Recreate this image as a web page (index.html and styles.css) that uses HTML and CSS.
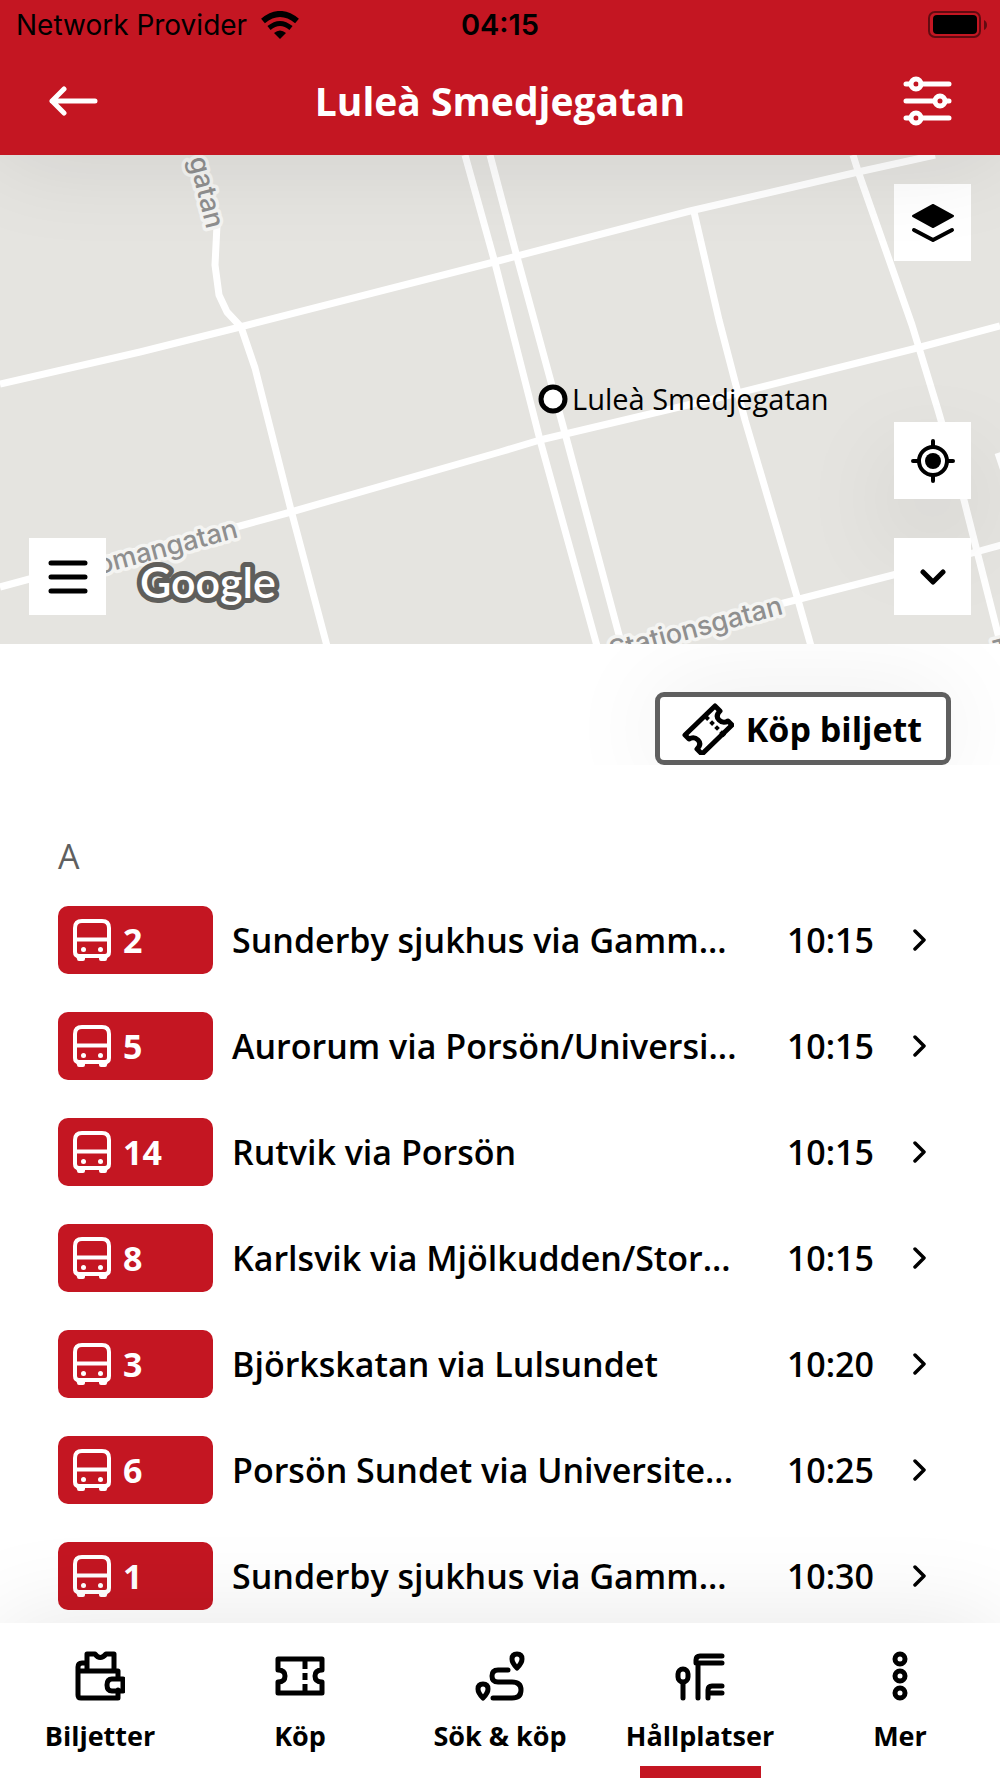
FILE: index.html
```html
<!DOCTYPE html>
<html lang="sv">
<head>
<meta charset="utf-8">
<meta name="viewport" content="width=device-width, initial-scale=1">
<title>Luleà Smedjegatan</title>
<link rel="stylesheet" href="styles.css">
</head>
<body>
<svg class="sprite" aria-hidden="true">
  <symbol id="bus" viewBox="0 0 38 42">
    <path d="M9 2h20q7 0 7 7v24q0 4-4 4H6q-4 0-4-4V9q0-7 7-7z" fill="none" stroke="currentColor" stroke-width="4"/>
    <path d="M2 20.500h34" stroke="currentColor" stroke-width="4"/>
    <path d="M3 37h9v3q0 2-2 2H6q-2 0-2-2zM26 37h9l-1 3q0 2-2 2h-4q-2 0-2-2z" fill="currentColor"/>
    <circle cx="10.500" cy="30.500" r="2.500" fill="currentColor"/><circle cx="27.500" cy="30.500" r="2.500" fill="currentColor"/>
  </symbol>
  <symbol id="next" viewBox="0 0 14 22">
    <path d="M2 2l9 9-9 9" fill="none" stroke="currentColor" stroke-width="3.500" stroke-linecap="round" stroke-linejoin="round"/>
  </symbol>
</svg>

<header class="top">
  <div class="status">
    <div class="carrier">
      <span>Network Provider</span>
      <svg width="38" height="28" viewBox="0 0 38 28" aria-hidden="true">
        <g fill="none" stroke="#000"><path d="M2 10Q19-4 36 10" stroke-width="6"/><path d="M8 17Q19 8 30 17" stroke-width="5"/></g>
        <path d="M13 22q6-5 12 0l-6 6z"/>
      </svg>
    </div>
    <time class="clock">04:15</time>
    <svg class="battery" width="60" height="28" viewBox="0 0 60 28" aria-hidden="true">
      <rect x="1" y="1" width="51" height="25" rx="6" fill="none" stroke="#000" stroke-opacity=".5" stroke-width="2"/>
      <rect x="5" y="4" width="44" height="19" rx="4"/>
      <path d="M56 9q3 1.500 3 5t-3 5z" fill-opacity=".5"/>
    </svg>
  </div>
  <div class="bar">
    <button class="plain" aria-label="Tillbaka">
      <svg width="50" height="30" viewBox="0 0 50 30" fill="none" stroke="#fff" stroke-width="5" stroke-linecap="round" stroke-linejoin="round"><path d="M47 15H4M16 3L4 15l12 12"/></svg>
    </button>
    <h1>Luleà Smedjegatan</h1>
    <button class="plain" aria-label="Filter">
      <svg width="50" height="50" viewBox="0 0 50 50" fill="none" stroke="#fff" stroke-width="5" stroke-linecap="round"><path d="M4 8h4M19 8h28M4 25h28M44 25h3M4 42h4M19 42h28"/><circle cx="14" cy="8" r="5"/><circle cx="38" cy="25" r="5"/><circle cx="14" cy="42" r="5"/></svg>
    </button>
  </div>
</header>

<section class="map" aria-label="Karta">
  <svg class="streets" viewBox="0 155 1000 489" preserveAspectRatio="xMidYMid slice">
    <g fill="none" stroke="#fff" stroke-width="7" stroke-linejoin="round">
      <path d="M0 384L140 352 240 327 498 261 690 211 858 172 935 155"/>
      <path d="M217 225L215 265 219 295 227 312 241 327 255 368 291 510 327 646"/>
      <path d="M0 587L100 560 240 526 291 512 500 452 540 440 730 395 917 348 1000 326"/>
      <path d="M465 155L495 263 540 440 597 646"/>
      <path d="M490 155L517 257 566 437 622 646"/>
      <path d="M694 212L719 320 745 420 798 600 811 646"/>
      <path d="M853 155L859 174 912 325 938 410 964 500 1001 646"/>
      <path d="M780 604L893 575 976 552 1001 545"/>
      <path d="M998 453l6 18"/>
    </g>
    <g class="street-name">
      <text transform="translate(189 159) rotate(76)">gatan</text>
      <text transform="translate(64 584) rotate(-15)">Stromangatan</text>
      <text transform="translate(612 660) rotate(-15)">Stationsgatan</text>
      <text transform="translate(996 660) rotate(-15)">T</text>
    </g>
    <circle cx="553" cy="399" r="12" fill="#fff" stroke="#000" stroke-width="5"/>
    <text class="stop-name" x="572" y="410">Luleà Smedjegatan</text>
    <text class="google" x="140" y="598">Google</text>
  </svg>
  <div class="tools">
    <button class="tool" aria-label="Meny">
      <svg width="42" height="36" viewBox="0 0 42 36" fill="none" stroke="#000" stroke-width="5" stroke-linecap="round"><path d="M4 4h34M4 18h34M4 32h34"/></svg>
    </button>
  </div>
  <div class="tools tools-right">
    <button class="tool layers" aria-label="Kartlager">
      <svg width="44" height="40" viewBox="0 0 44 40"><path d="M22 2l20 11-20 11L2 13z" stroke="#000" stroke-width="2" stroke-linejoin="round"/><path d="M3 27l19 10 19-10" fill="none" stroke="#000" stroke-width="4" stroke-linecap="round" stroke-linejoin="round"/></svg>
    </button>
    <button class="tool locate" aria-label="Min position">
      <svg width="44" height="44" viewBox="0 0 44 44" fill="none" stroke="#000" stroke-width="4" stroke-linecap="round"><circle cx="22" cy="22" r="14"/><circle cx="22" cy="22" r="8" fill="#000" stroke="none"/><path d="M22 2v6M22 36v6M2 22h6M36 22h6"/></svg>
    </button>
    <button class="tool" aria-label="Fäll ihop">
      <svg width="26" height="16" viewBox="0 0 26 16" fill="none" stroke="#000" stroke-width="5" stroke-linecap="round" stroke-linejoin="round"><path d="M3 3l10 10L23 3"/></svg>
    </button>
  </div>
</section>

<main>
  <div class="buy-row">
    <button class="buy">
      <svg width="52" height="52" viewBox="0 0 52 52" fill="none" stroke="#000" stroke-width="5" stroke-linejoin="round"><path d="M3 32L33 3l5 5q-5 5-1 9t9 1l4 4-30 29-5-5q5-5 1-9t-9-1z"/><path d="M23 13l20 20" stroke-width="4" stroke-dasharray="5 3 4 3 4 3 6"/></svg>
      <span>Köp biljett</span>
    </button>
  </div>
  <section class="departures">
    <h2>A</h2>
    <ul>
      <li><a href="#"><span class="line"><svg><use href="#bus"/></svg>2</span><span class="dest">Sunderby sjukhus via Gamm...</span><time>10:15</time><svg class="next"><use href="#next"/></svg></a></li>
      <li><a href="#"><span class="line"><svg><use href="#bus"/></svg>5</span><span class="dest">Aurorum via Porsön/Universi...</span><time>10:15</time><svg class="next"><use href="#next"/></svg></a></li>
      <li><a href="#"><span class="line"><svg><use href="#bus"/></svg>14</span><span class="dest">Rutvik via Porsön</span><time>10:15</time><svg class="next"><use href="#next"/></svg></a></li>
      <li><a href="#"><span class="line"><svg><use href="#bus"/></svg>8</span><span class="dest">Karlsvik via Mjölkudden/Stor...</span><time>10:15</time><svg class="next"><use href="#next"/></svg></a></li>
      <li><a href="#"><span class="line"><svg><use href="#bus"/></svg>3</span><span class="dest">Björkskatan via Lulsundet</span><time>10:20</time><svg class="next"><use href="#next"/></svg></a></li>
      <li><a href="#"><span class="line"><svg><use href="#bus"/></svg>6</span><span class="dest">Porsön Sundet via Universite...</span><time>10:25</time><svg class="next"><use href="#next"/></svg></a></li>
      <li><a href="#"><span class="line"><svg><use href="#bus"/></svg>1</span><span class="dest">Sunderby sjukhus via Gamm...</span><time>10:30</time><svg class="next"><use href="#next"/></svg></a></li>
    </ul>
  </section>
</main>

<nav class="tabs">
  <a href="#">
    <svg viewBox="0 0 50 50"><path d="M12 19V3h8q5 7 11 0h8v16M12 12H7q-4 0-4 4v28q0 3 3 3h37v-8M3 20h40v8M48 28H37q-5 0-5 6t5 6h11z"/></svg>
    <span>Biljetter</span>
  </a>
  <a href="#">
    <svg viewBox="0 0 50 50"><path d="M3 8h44v11q-7 0-7 6t7 6v11H3V31q7 0 7-6t-7-6z"/><path class="perforation" d="M30 8v10M30 22v7M30 33v9"/></svg>
    <span>Köp</span>
  </a>
  <a href="#">
    <svg viewBox="0 0 50 50"><path d="M18 47h19q9 0 9-8t-9-8H23q-6 0-6-6t6-6h10"/><path d="M42 3q5 0 5 5 0 4-5 9-5-5-5-9 0-5 5-5zM8 33q5 0 5 5 0 4-5 9-5-5-5-9 0-5 5-5z"/></svg>
    <span>Sök &amp; köp</span>
  </a>
  <a href="#" class="active" aria-current="page">
    <svg viewBox="0 0 50 50"><path d="M8 32v15M23 14v33M47 5H25q-4 0-4 4v3h26M47 35H37q-4 0-4 4v8M33 42h14"/><rect x="3" y="18" width="10" height="13" rx="5"/></svg>
    <span>Hållplatser</span>
  </a>
  <a href="#">
    <svg viewBox="0 0 50 50"><circle cx="25" cy="8" r="5"/><circle cx="25" cy="25" r="5"/><circle cx="25" cy="42" r="5"/></svg>
    <span>Mer</span>
  </a>
</nav>
</body>
</html>
```
FILE: styles.css
```css
* { box-sizing: border-box; margin: 0; padding: 0; }

:root { --red: #c41622; --app: "Open Sans", "Noto Sans", sans-serif; }

body {
  min-height: 100vh;
  display: flex;
  flex-direction: column;
  background: #fff;
  color: #000;
  font-family: var(--app);
}

button { border: 0; background: none; font: inherit; color: inherit; cursor: pointer; }
a { color: inherit; text-decoration: none; }
svg { display: block; flex: none; }
.sprite { position: absolute; width: 0; height: 0; }

.top {
  position: relative;
  z-index: 2;
  background: var(--red);
  box-shadow: 0 0 100px rgba(0, 0, 0, .1);
}
.status {
  display: grid;
  grid-template-columns: 1fr auto 1fr;
  align-items: center;
  height: 50px;
  padding: 0 16px;
  font: 400 28px/50px Inter, sans-serif;
}
.carrier { display: flex; align-items: center; gap: 14px; white-space: nowrap; }
.clock { font-size: 29px; font-weight: 600; }
.battery { justify-self: end; margin-right: -4px; }
.bar {
  display: grid;
  grid-template-columns: 50px 1fr 50px;
  align-items: center;
  height: 105px;
  padding: 0 48px 4px;
}
.plain { display: grid; place-items: center; height: 50px; }
h1 { color: #fff; font-size: 39px; line-height: 52px; text-align: center; }

.map {
  position: relative;
  height: 489px;
  overflow: hidden;
  display: flex;
  justify-content: space-between;
  padding: 29px;
  background: #e5e4e0;
}
.streets { position: absolute; inset: 0; width: 100%; height: 100%; }
.street-name {
  font: 500 27px Inter, sans-serif;
  fill: #8f8f8f;
  stroke: #f4f4f2;
  stroke-width: 7px;
  stroke-linejoin: round;
  paint-order: stroke;
}
.stop-name { font: 400 29px var(--app); }
.google {
  font: 600 43px Lato, sans-serif;
  fill: #fff;
  stroke: #5f5e5b;
  stroke-width: 10px;
  stroke-linejoin: round;
  paint-order: stroke;
}
.tools { position: relative; display: flex; flex-direction: column; justify-content: flex-end; }
.tools-right { gap: 39px; }
.tool { display: grid; place-items: center; width: 77px; height: 77px; background: #fff; }
.layers { margin-bottom: auto; }
.locate { box-shadow: 0 38px 100px rgba(0, 0, 0, .1); }

.buy-row {
  display: flex;
  justify-content: flex-end;
  padding: 48px 49px 0;
  overflow: hidden;
}
.buy {
  display: flex;
  align-items: center;
  gap: 12px;
  height: 73px;
  padding: 0 24px 0 22px;
  border: 5px solid #5f5f5f;
  border-radius: 9px;
  background: #fff;
  box-shadow: 0 0 100px rgba(0, 0, 0, .08);
  font-size: 34px;
  font-weight: 700;
}

.departures { padding: 68px 58px 0; }
h2 { color: #5f5f5f; font-size: 34px; font-weight: 400; line-height: 46px; }
ul { display: flex; flex-direction: column; gap: 38px; padding: 27px 0 12px; list-style: none; }
li a { display: flex; align-items: center; height: 68px; font-size: 34px; font-weight: 600; }
.line {
  display: flex;
  align-items: center;
  gap: 12px;
  width: 155px;
  height: 68px;
  padding-left: 15px;
  border-radius: 10px;
  background: var(--red);
  color: #fff;
  font-weight: 700;
}
.line svg { width: 38px; height: 42px; }
.dest { flex: 1; padding-left: 19px; }
.next { width: 14px; height: 22px; margin: 0 15px 0 39px; }

.tabs {
  position: sticky;
  bottom: 0;
  display: grid;
  grid-template-columns: repeat(5, 1fr);
  height: 155px;
  margin-top: auto;
  background: #fff;
  box-shadow: 0 0 100px rgba(0, 0, 0, .1);
}
.tabs a {
  position: relative;
  display: flex;
  flex-direction: column;
  align-items: center;
  gap: 16px;
  padding-top: 28px;
  font-size: 27px;
  font-weight: 700;
  line-height: 38px;
  white-space: nowrap;
}
.tabs svg {
  width: 50px;
  height: 50px;
  fill: none;
  stroke: #000;
  stroke-width: 5;
  stroke-linecap: round;
  stroke-linejoin: round;
}
.tabs .perforation { stroke-linecap: butt; }
.active::after {
  content: "";
  position: absolute;
  bottom: 0;
  width: 121px;
  height: 12px;
  background: var(--red);
}
```
